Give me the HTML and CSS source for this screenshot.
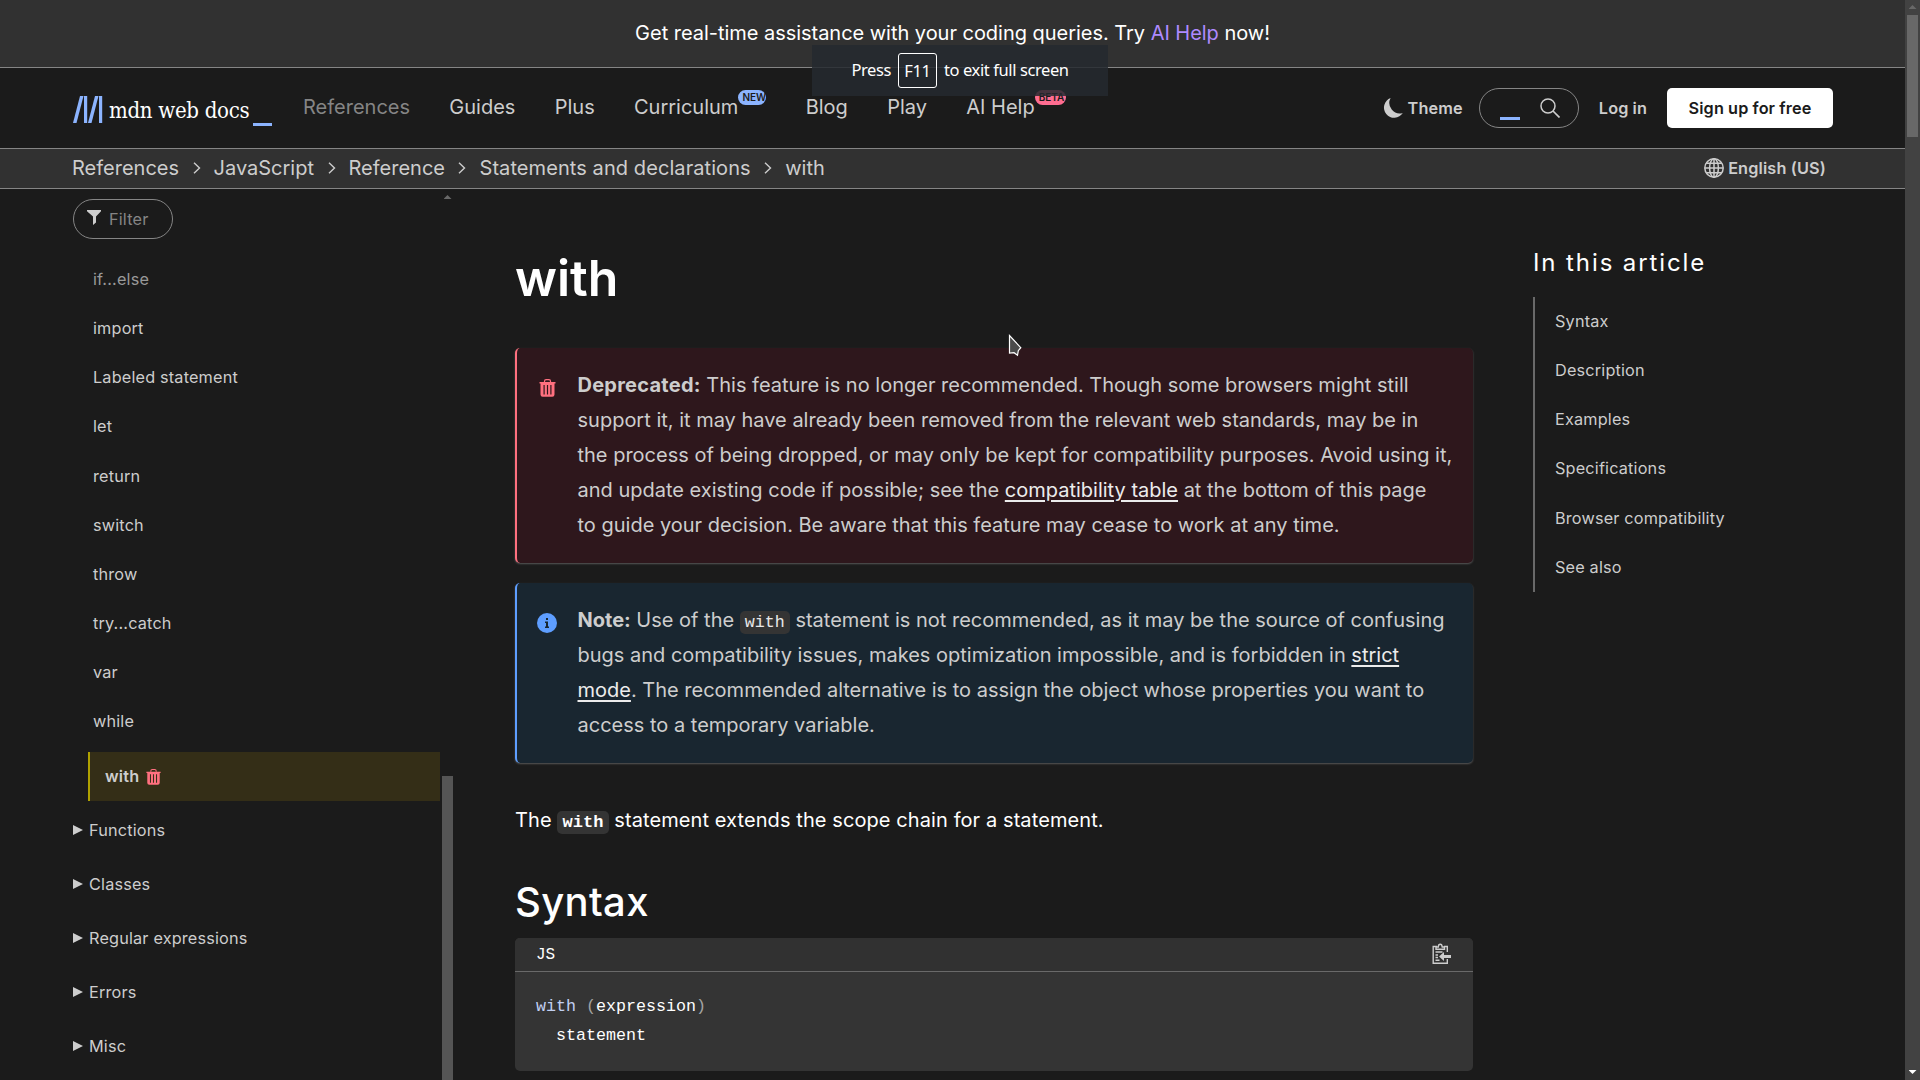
FILE: index.html
```html
<!DOCTYPE html>
<html lang="en-US">
<head>
<meta charset="utf-8">
<title>with - JavaScript | MDN</title>
<link rel="stylesheet" href="styles.css">
</head>
<body>
<svg class="defs" width="0" height="0">
  <symbol id="trash" viewBox="0 0 16 18"><path d="M5 3V2.2Q5 .6 6.600 .6h2.800Q11 .6 11 2.200V3" fill="none" stroke="currentColor" stroke-width="1.200"/><path fill="currentColor" fill-rule="evenodd" d="M0 3h16v1.400h-1V15.500q0 2.200-2.200 2.200H3.200Q1 17.700 1 15.500V4.400H0zM4 6v9.500h1.200V6zM7.400 6v9.500h1.200V6zM10.800 6v9.500H12V6z"/></symbol>
  <symbol id="chev" viewBox="0 0 8 12"><path d="M1 .8 6.500 6 1 11.200" fill="none" stroke="currentColor" stroke-width="1.400"/></symbol>
</svg>
<div class="page">
  <div class="banner"><p>Get real-time assistance with your coding queries. Try <a href="#">AI Help</a> now!</p></div>
  <header class="header">
    <a class="logo" href="#">
      <svg width="30" height="27" viewBox="0 0 30 27"><g fill="#8cb4ff"><path d="M7 0h3.500L3.500 27H0z"/><path d="M11 0h3.200v27H11z"/><path d="M22 0h3.500l-7 27H15z"/><path d="M26 0h3.200v27H26z"/></g></svg>
      <span class="logo-text">mdn web docs</span><span class="logo-caret"></span>
    </a>
    <nav class="nav">
      <a class="muted" href="#">References</a>
      <a href="#">Guides</a>
      <a href="#">Plus</a>
      <a href="#">Curriculum<sup class="badge new">NEW</sup></a>
      <a href="#">Blog</a>
      <a href="#">Play</a>
      <a href="#">AI Help<sup class="badge beta">BETA</sup></a>
    </nav>
    <div class="actions">
      <button class="theme"><svg width="20" height="20" viewBox="0 0 20 20"><path fill="#cdcdcd" d="M7.600 0A10.200 10.200 0 1 0 19.800 15 10.500 10.500 0 0 1 7.600 0z"/></svg>Theme</button>
      <div class="search"><span class="search-caret"></span><svg width="20" height="20" viewBox="0 0 20 20"><circle cx="8" cy="8" r="7" fill="none" stroke="#cdcdcd" stroke-width="1.500"/><path d="m13 13 6.500 6.500" stroke="#cdcdcd" stroke-width="1.700"/></svg></div>
      <a class="login" href="#">Log in</a>
      <a class="signup" href="#">Sign up for free</a>
    </div>
  </header>
  <div class="crumbs">
    <nav class="trail">
      <a href="#">References</a><svg class="chev"><use href="#chev"/></svg>
      <a href="#">JavaScript</a><svg class="chev"><use href="#chev"/></svg>
      <a href="#">Reference</a><svg class="chev"><use href="#chev"/></svg>
      <a class="wide" href="#">Statements and declarations</a><svg class="chev"><use href="#chev"/></svg>
      <a href="#">with</a>
    </nav>
    <button class="lang"><svg width="20" height="20" viewBox="0 0 20 20"><g fill="none" stroke="#cdcdcd" stroke-width="1.500"><circle cx="10" cy="10" r="9.200"/><ellipse cx="10" cy="10" rx="4.400" ry="9.200"/><path d="M10 1v18M1 10h18M2.300 5.300h15.400M2.300 14.700h15.400"/></g></svg>English (US)</button>
  </div>
  <div class="columns">
    <aside class="sidebar">
      <div class="side-main">
        <div class="filter"><svg width="14" height="15" viewBox="0 0 14 15"><path fill="#cdcdcd" d="M0 0h14v1.200L9 6.500V12.500L6 15V6.500L0 1.200z"/></svg>Filter</div>
        <ul class="links">
          <li class="faded">if...else</li><li>import</li><li>Labeled statement</li><li>let</li><li>return</li><li>switch</li><li>throw</li><li>try...catch</li><li>var</li><li>while</li>
          <li class="current">with<svg class="trash" width="15" height="16"><use href="#trash"/></svg></li>
        </ul>
        <ul class="groups"><li>Functions</li><li>Classes</li><li>Regular expressions</li><li>Errors</li><li>Misc</li></ul>
      </div>
      <div class="side-scroll"><i class="arrow-up"></i><i class="side-thumb"></i></div>
    </aside>
    <main class="article">
      <h1>with</h1>
      <div class="card deprecated">
        <svg class="trash" width="17" height="18"><use href="#trash"/></svg>
        <p><strong>Deprecated:</strong> This feature is no longer recommended. Though some browsers might still<br>support it, it may have already been removed from the relevant web standards, may be in<br>the process of being dropped, or may only be kept for compatibility purposes. Avoid using it,<br>and update existing code if possible; see the <a href="#">compatibility table</a> at the bottom of this page<br>to guide your decision. Be aware that this feature may cease to work at any time.</p>
      </div>
      <div class="card note">
        <svg width="20" height="20" viewBox="0 0 20 20"><circle cx="10" cy="10" r="10" fill="#5e9eff"/><path fill="#172631" d="M9 5h2v2H9zM8 8.500h3v5h1V15H8v-1.500h1V10H8z"/></svg>
        <p><strong>Note:</strong> Use of the <code>with</code> statement is not recommended, as it may be the source of confusing<br>bugs and compatibility issues, makes optimization impossible, and is forbidden in <a href="#">strict<br>mode</a>. The recommended alternative is to assign the object whose properties you want to<br>access to a temporary variable.</p>
      </div>
      <p class="intro">The <code>with</code> statement extends the scope chain for a statement.</p>
      <h2>Syntax</h2>
      <div class="code">
        <div class="code-head"><span>JS</span><svg width="20" height="22" viewBox="0 0 20 22"><g fill="none" stroke="#cdcdcd" stroke-width="1.400"><path d="M15.300 9V3.500H12M15.300 16v4.300H1.200V3.500H5"/><path d="M4 6.200V4h2.300Q6.400 1.200 8.200 1.200T10.200 4h2.300v2.200z"/><path d="M3.500 9h7M3.500 12h2.500M3.500 14.500h2.500M3.500 17.200h4"/></g><path fill="#cdcdcd" d="M7 13.500 12 9v3h7v3h-7v3z"/></svg></div>
<pre><span class="kw">with</span> <span class="pn">(</span>expression<span class="pn">)</span>
  statement</pre>
      </div>
    </main>
    <aside class="toc">
      <h2>In this article</h2>
      <ul><li>Syntax</li><li>Description</li><li>Examples</li><li>Specifications</li><li>Browser compatibility</li><li>See also</li></ul>
    </aside>
  </div>
</div>
<div class="page-scroll"><i class="arrow-up"></i><i class="page-thumb"></i><i class="arrow-down"></i></div>
<div class="fs-hint"><span>Press</span><kbd>F11</kbd><span>to exit full screen</span></div>
<svg class="cursor" width="16" height="24" viewBox="0 0 16 24"><path d="M1.500 1.500v17.500l4.500-.3 3.500 2.600.8-4.600 2.500-3z" fill="#4a4a4a" stroke="#fff" stroke-width="1.200"/></svg>
</body>
</html>
```
FILE: styles.css
```css
* { box-sizing: border-box; }
html, body { margin: 0; height: 1080px; overflow: hidden; }
body { display: flex; background: #1b1b1b; color: #fff; font: 20px/35px Inter, sans-serif; }
p, h1, h2, ul, pre { margin: 0; padding: 0; }
ul { list-style: none; }
a { color: inherit; text-decoration: none; }
button { display: flex; align-items: center; padding: 0; border: 0; background: none; color: #cdcdcd; font: 600 16.250px/20px Inter, sans-serif; letter-spacing: .15px; }
svg { flex: none; }
.defs { position: absolute; }
.page { width: 1905px; height: 1080px; overflow: hidden; }

.banner { height: 68px; padding-top: 16px; background: #313131; border-bottom: 1px solid #858585; text-align: center; letter-spacing: -.03px; }
.banner a { color: #ae8aff; }

.header { display: flex; align-items: center; height: 81px; padding: 0 72px 1px 73px; border-bottom: 1px solid #858585; color: #cdcdcd; }
.logo { display: flex; width: 200px; height: 30px; margin-top: 6px; color: #fff; }
.logo-text { width: 143px; margin-left: 6px; font: 22px/30px "DejaVu Serif Condensed", "DejaVu Serif", serif; font-stretch: condensed; letter-spacing: -.3px; white-space: nowrap; }
.logo-caret { width: 19px; height: 3px; margin-top: 27px; margin-left: 1px; background: #8cb4ff; }
.nav { display: flex; gap: 39.300px; margin-left: 30px; white-space: nowrap; }
.nav .muted { color: #858585; }
.nav a { display: flex; }
.badge { height: 15px; padding: 0 4px; border-radius: 8px; color: #1b1b1b; font: 600 10px/15px Inter, sans-serif; }
.new { background: #8cb4ff; width: 28px; }
.beta { background: #ff6d91; width: 31px; }
.actions { display: flex; align-items: center; margin-left: auto; font: 600 16.250px/20px Inter, sans-serif; letter-spacing: .1px; }
.theme { gap: 5px; }
.search { display: flex; justify-content: space-between; width: 100px; height: 40px; margin: 0 20px 0 16px; padding: 9px 18px 0 20px; border: 1px solid #858585; border-radius: 20px; }
.search-caret { width: 20px; height: 3px; margin-top: 19px; background: #8cb4ff; }
.signup { width: 166px; height: 40px; margin-left: 20px; border-radius: 5px; background: #fff; color: #1b1b1b; line-height: 40px; text-align: center; }

.crumbs { display: flex; justify-content: space-between; height: 40px; padding: 0 79px 1px 72px; background: #313131; border-bottom: 1px solid #858585; color: #cdcdcd; line-height: 38px; }
.trail { display: flex; align-items: center; }
.wide { letter-spacing: .08px; }
.chev { width: 8px; height: 12px; margin: 0 13px 0 13.500px; }
.lang { gap: 4px; }

.columns { display: flex; height: 891px; }
.sidebar { display: flex; width: 455px; padding-left: 73px; color: #cdcdcd; font-size: 16.250px; letter-spacing: .17px; }
.side-main { width: 367px; padding-top: 10px; }
.filter { display: flex; align-items: center; gap: 8px; width: 100px; height: 40px; padding-left: 13px; border: 1px solid #858585; border-radius: 20px; color: #858585; }
.filter svg { margin-bottom: 3px; }
.links { padding: 16px 0 0 15px; }
.links li { height: 49.150px; padding-left: 5px; line-height: 49px; }
.links .faded { color: #999; }
.links .current { display: flex; align-items: center; gap: 7px; height: 49px; margin: 6px 0 2px; padding-left: 15px; background: #342e17; border-left: 2px solid #afa100; font-weight: 600; }
.trash { color: #ff707f; }
.groups li { display: flex; align-items: center; gap: 6px; height: 54px; }
.groups li::before { content: ""; border-left: 10px solid #cdcdcd; border-top: 5.500px solid transparent; border-bottom: 5.500px solid transparent; }
.side-scroll { width: 11px; margin-left: 2px; padding-top: 6px; }
.arrow-up, .arrow-down { display: block; width: 8px; height: 4px; margin: 0 auto; background: #686868; clip-path: polygon(50% 0, 100% 100%, 0 100%); }
.side-thumb { display: block; height: 310px; margin-top: 577px; background: #555; }

.article { width: 958px; margin-left: 60px; padding-top: 59px; }
h1 { font-size: 50px; font-weight: 600; line-height: 60px; }
.card { display: flex; padding: 20px; border-left: 2px solid; border-radius: 5px; box-shadow: 0 1px 2px #585858; color: #cdcdcd; white-space: nowrap; }
.card svg { margin: 10px 20.500px 0 0; }
.card .trash { margin: 11px 22px 0 1.500px; }
.card a { color: #ececec; text-decoration: underline; text-decoration-thickness: 2px; text-underline-offset: 3px; }
.deprecated { margin-top: 40px; border-color: #ff707f; background: #2e171c; }
.deprecated strong { letter-spacing: .25px; }
.note { margin-top: 20px; border-color: #5e9eff; background: #192630; }
code { padding: 2px 5px; border-radius: 5px; background: #343434; font: 16.670px/20px "Liberation Mono", monospace; color: #e8e8e8; }
.intro { margin-top: 40px; letter-spacing: .09px; }
.intro code { color: #fff; font-size: 17px; font-weight: 700; }
.article h2 { margin-top: 34px; font-size: 40px; font-weight: 500; line-height: 60px; letter-spacing: .35px; }
.code { margin-top: 6px; height: 133px; border-radius: 5px; overflow: hidden; background: #343434; font-family: "Liberation Mono", monospace; }
.code-head { display: flex; justify-content: space-between; align-items: center; height: 34px; padding: 0 21px; background: #313131; border-bottom: 1px solid #696969; font-size: 16px; }
.code-head span { padding-top: 1px; }
.code-head svg { margin-bottom: 2px; }
pre { padding: 20px 21px; font: 16.670px/29.170px "Liberation Mono", monospace; }
.kw { color: #c1cff1; }
.pn { color: #a3a3a3; }

.toc { width: 300px; margin-left: 60px; padding-top: 56px; color: #cdcdcd; font-size: 16.250px; letter-spacing: .17px; }
.toc h2 { color: #fff; font-size: 24px; font-weight: 400; line-height: 36px; letter-spacing: 1.900px; }
.toc ul { margin-top: 16px; border-left: 2px solid #696969; }
.toc li { height: 49.170px; padding-left: 20px; line-height: 49px; }

.page-scroll { display: flex; flex-direction: column; width: 15px; height: 1080px; background: #424242; }
.page-scroll .arrow-up { margin-top: 5px; }
.page-thumb { width: 11px; height: 122px; margin: 6px 2px auto; background: #686868; }
.page-scroll .arrow-down { margin-bottom: 6px; background: #fff; clip-path: polygon(0 0, 100% 0, 50% 100%); }

.fs-hint { position: absolute; left: 812px; top: 45px; display: flex; align-items: center; justify-content: center; gap: 7px; width: 296px; height: 51px; padding-bottom: 1px; background: rgba(37, 41, 47, .85); color: #fff; font: 16.500px/20px "Noto Sans", sans-serif; letter-spacing: -.4px; white-space: nowrap; }
.fs-hint kbd { width: 39px; height: 35px; border: 1px solid #fff; border-radius: 3px; font: inherit; line-height: 33px; text-align: center; }
.cursor { position: absolute; left: 1008px; top: 334px; }
```
